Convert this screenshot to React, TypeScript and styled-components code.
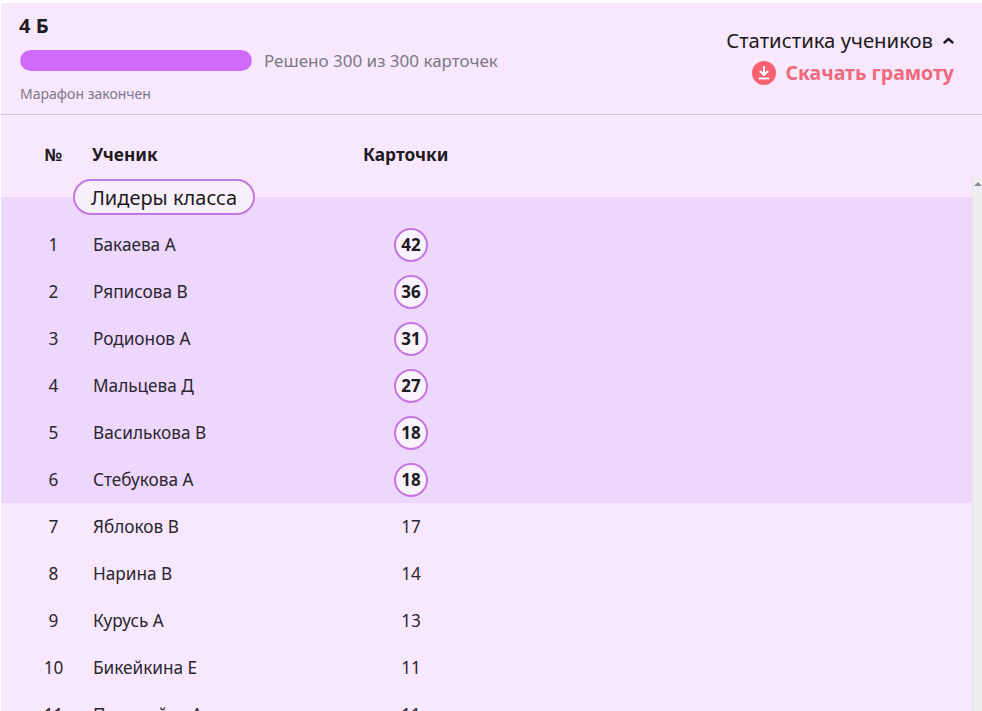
import React from "react";
import styled, { createGlobalStyle } from "styled-components";

const Global = createGlobalStyle`
  html, body { margin: 0; padding: 0; height: 100%; background: #fff; overflow: hidden; }
  body { font-family: "Noto Sans", sans-serif; color: #1d1a20; }
  #root { height: 100%; }
`;

const Page = styled.div`
  height: 711px;
  box-sizing: border-box;
  padding: 3px 0 0 1px;
  overflow: hidden;
`;

const Panel = styled.div`
  height: 708px;
  background: #f8e8fd;
  display: flex;
  flex-direction: column;
  border-radius: 3px 0 0 0;
`;

const Header = styled.header`
  height: 112px;
  flex: none;
  box-sizing: border-box;
  border-bottom: 1px solid #cfbfd8;
  display: flex;
  justify-content: space-between;
`;

const Summary = styled.div`
  padding: 9px 0 0 18px;
`;

const ClassName = styled.h2`
  margin: 0;
  font-size: 20px;
  line-height: 27px;
  font-weight: 700;
  color: #1d1a20;
`;

const ProgressRow = styled.div`
  display: flex;
  align-items: center;
  gap: 12px;
  margin-top: 10px;
  padding-left: 1px;
`;

const Track = styled.div`
  width: 232px;
  height: 21px;
  border-radius: 11px;
  background: #e5d3f2;
  overflow: hidden;
`;

const Fill = styled.div`
  height: 100%;
  border-radius: 11px;
  background: #d06bfd;
`;

const ProgressText = styled.span`
  font-size: 17px;
  line-height: 23px;
  color: #7c7885;
`;

const Status = styled.div`
  margin: 12px 0 0 1px;
  font-size: 14px;
  line-height: 19px;
  color: #7c7885;
`;

const Actions = styled.div`
  padding: 23px 28px 0 0;
  display: flex;
  flex-direction: column;
  align-items: flex-end;
`;

const StatsToggle = styled.button`
  display: flex;
  align-items: center;
  gap: 10px;
  padding: 0;
  border: 0;
  background: none;
  font: 400 20.3px/28px "Noto Sans", sans-serif;
  color: #1d1a20;
`;

const Download = styled.a`
  display: flex;
  align-items: center;
  gap: 9px;
  margin-top: 5px;
  font-size: 19.5px;
  line-height: 28px;
  font-weight: 700;
  color: #ee6a7c;
`;

const Table = styled.div`
  flex: 1;
  min-height: 0;
  overflow: hidden;
`;

const HeadRow = styled.div`
  display: grid;
  grid-template-columns: 91px 271px auto;
  height: 63px;
  padding-top: 26px;
  box-sizing: border-box;
  font-size: 17.3px;
  line-height: 27px;
  font-weight: 700;
`;

const HeadNumber = styled.div`
  text-align: center;
  padding-left: 14px;
`;

const Body = styled.div`
  display: flex;
  height: 533px;
`;

const Rows = styled.div`
  flex: 1;
  min-width: 0;
  padding-top: 19px;
`;

const Scrollbar = styled.div`
  width: 9px;
  flex: none;
  background: #efedf0;
  border-left: 1px solid #e3dfe5;
  display: flex;
  justify-content: center;
  padding-top: 4px;
  box-sizing: content-box;
`;

const Leaders = styled.section`
  position: relative;
  background: #edd7fd;
  padding-top: 24px;
`;

const LeadersBadge = styled.div`
  position: absolute;
  left: 72px;
  top: -18px;
  width: 182px;
  height: 36px;
  box-sizing: border-box;
  display: flex;
  align-items: center;
  justify-content: center;
  font-size: 20px;
  color: #1d1a20;
  background: #f9f0fd;
  border: 2px solid #c677df;
  border-radius: 18px;
`;

const Row = styled.div`
  display: grid;
  grid-template-columns: 92px 271px 94px;
  height: 47px;
  align-items: center;
  font-size: 17.2px;
  color: #2a262e;
`;

const Num = styled.div`
  text-align: center;
  padding-left: 13px;
`;

const Name = styled.div`
  padding-left: 0;
`;

const Score = styled.div`
  display: flex;
  justify-content: center;
`;

const ScoreCircle = styled.div`
  width: 34px;
  height: 34px;
  box-sizing: border-box;
  border-radius: 50%;
  background: #faf3fe;
  border: 2px solid #c677df;
  display: flex;
  align-items: center;
  justify-content: center;
  font-size: 17px;
  font-weight: 700;
  color: #1d1a20;
`;

const ArrowTop = styled.div`
  width: 0;
  height: 0;
  border-left: 4px solid transparent;
  border-right: 4px solid transparent;
  border-bottom: 4px solid #8b8890;
`;

const leaders: [string, number][] = [
  ["Бакаева А", 42],
  ["Ряписова В", 36],
  ["Родионов А", 31],
  ["Мальцева Д", 27],
  ["Василькова В", 18],
  ["Стебукова А", 18],
];

const others: [string, number][] = [
  ["Яблоков В", 17],
  ["Нарина В", 14],
  ["Курусь А", 13],
  ["Бикейкина Е", 11],
  ["Полежайко А", 11],
];

export default function App() {
  return (
    <Page>
      <Global />
      <Panel>
        <Header>
          <Summary>
            <ClassName>4 Б</ClassName>
            <ProgressRow>
              <Track>
                <Fill style={{ width: `${(300 / 300) * 100}%` }} />
              </Track>
              <ProgressText>Решено 300 из 300 карточек</ProgressText>
            </ProgressRow>
            <Status>Марафон закончен</Status>
          </Summary>
          <Actions>
            <StatsToggle>
              Статистика учеников
              <svg width="11" height="7" viewBox="0 0 11 7" fill="none">
                <path d="M1.5 5.5 5.5 1.8l4 3.7" stroke="#1d1a20" strokeWidth="2.4" strokeLinecap="round" strokeLinejoin="round" />
              </svg>
            </StatsToggle>
            <Download>
              <svg width="24" height="24" viewBox="0 0 24 24">
                <circle cx="12" cy="12" r="12" fill="#f8616f" />
                <path d="M12 6v7.5M8.5 10.5 12 14l3.5-3.5M7.5 17.5h9" fill="none" stroke="#fff" strokeWidth="2" strokeLinecap="round" strokeLinejoin="round" />
              </svg>
              Скачать грамоту
            </Download>
          </Actions>
        </Header>
        <Table>
          <HeadRow>
            <HeadNumber>№</HeadNumber>
            <div>Ученик</div>
            <div>Карточки</div>
          </HeadRow>
          <Body>
            <Rows>
              <Leaders>
                <LeadersBadge>Лидеры класса</LeadersBadge>
                {leaders.map(([name, score], i) => (
                  <Row key={name}>
                    <Num>{i + 1}</Num>
                    <Name>{name}</Name>
                    <Score>
                      <ScoreCircle>{score}</ScoreCircle>
                    </Score>
                  </Row>
                ))}
              </Leaders>
              {others.map(([name, score], i) => (
                <Row key={name}>
                  <Num>{i + 7}</Num>
                  <Name>{name}</Name>
                  <Score>{score}</Score>
                </Row>
              ))}
            </Rows>
            <Scrollbar>
              <ArrowTop />
            </Scrollbar>
          </Body>
        </Table>
      </Panel>
    </Page>
  );
}
